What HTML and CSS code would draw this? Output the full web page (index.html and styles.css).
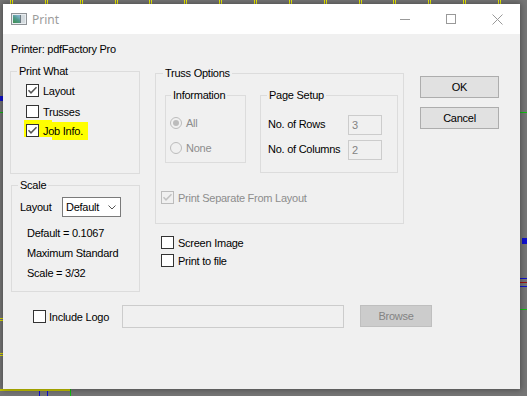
FILE: index.html
```html
<!DOCTYPE html>
<html>
<head>
<meta charset="utf-8">
<title>Print</title>
<link rel="stylesheet" href="styles.css">
</head>
<body>
<div class="window">
  <div class="titlebar">
    <svg class="app-icon" width="16" height="12" viewBox="0 0 16 12">
      <defs>
        <linearGradient id="pic" x1="0" y1="1" x2="0.6" y2="0">
          <stop offset="0" stop-color="#3f8f4f"/>
          <stop offset="0.6" stop-color="#4f9a8c"/>
          <stop offset="1" stop-color="#7fb0c8"/>
        </linearGradient>
      </defs>
      <rect x="0.5" y="0.5" width="15" height="11" fill="#e9edf0" stroke="#8e9296"/>
      <rect x="2" y="2" width="7" height="8" fill="url(#pic)"/>
      <rect x="9" y="2" width="1" height="8" fill="#6d7a82"/>
      <rect x="10" y="2" width="4" height="8" fill="#d3dade"/>
    </svg>
    <span class="title">Print</span>
    <div class="caption">
      <span class="cap"><svg width="10" height="10" viewBox="0 0 10 10"><path d="M0 5.5H10" stroke="#999" stroke-width="1"/></svg></span>
      <span class="cap"><svg width="10" height="10" viewBox="0 0 10 10"><rect x="0.5" y="0.5" width="9" height="9" fill="none" stroke="#999"/></svg></span>
      <span class="cap"><svg width="11" height="11" viewBox="0 0 11 11"><path d="M0.5 0.5L10.5 10.5M10.5 0.5L0.5 10.5" stroke="#999" stroke-width="1"/></svg></span>
    </div>
  </div>

  <div class="content">
    <div class="printer">Printer: pdfFactory Pro</div>

    <div class="main">
      <div class="col-left">
        <fieldset class="grp print-what">
          <legend class="lg-pw">Print What</legend>
          <div class="pw-list">
            <div class="chk r1"><span class="box"><svg class="tick" width="11" height="11" viewBox="0 0 11 11"><polyline points="1.5,5.2 4,7.8 9.5,2.2" fill="none" stroke="#555" stroke-width="1.5"/></svg></span><span>Layout</span></div>
            <div class="chk r2"><span class="box"></span><span>Trusses</span></div>
            <div class="chk r3 hl"><span class="box"><svg class="tick" width="11" height="11" viewBox="0 0 11 11"><polyline points="1.5,5.2 4,7.8 9.5,2.2" fill="none" stroke="#555" stroke-width="1.5"/></svg></span><span>Job Info.</span></div>
          </div>
        </fieldset>

        <fieldset class="grp scale">
          <legend class="lg-scale">Scale</legend>
          <div class="scale-row">
            <span class="lbl-layout">Layout</span>
            <div class="select"><span>Default</span><svg class="chev" width="8" height="5" viewBox="0 0 8 5"><polyline points="0.5,0.5 4,4 7.5,0.5" fill="none" stroke="#555" stroke-width="1"/></svg></div>
          </div>
          <div class="scale-info">
            <div>Default = 0.1067</div>
            <div>Maximum Standard</div>
            <div>Scale = 3/32</div>
          </div>
        </fieldset>
      </div>

      <div class="col-mid">
        <fieldset class="grp truss">
          <legend class="lg-truss">Truss Options</legend>
          <div class="truss-inner">
            <fieldset class="grp info">
              <legend class="lg-info">Information</legend>
              <div class="rad rr1"><span class="radio on"></span><span class="dis">All</span></div>
              <div class="rad rr2"><span class="radio"></span><span class="dis">None</span></div>
            </fieldset>
            <fieldset class="grp page">
              <legend class="lg-page">Page Setup</legend>
              <div class="ps-row p1"><span class="ps-lbl">No. of Rows</span><span class="num">3</span></div>
              <div class="ps-row p2"><span class="ps-lbl">No. of Columns</span><span class="num">2</span></div>
            </fieldset>
          </div>
          <div class="chk sep"><span class="box disabled"><svg class="tick" width="11" height="11" viewBox="0 0 11 11"><polyline points="1.5,5.2 4,7.8 9.5,2.2" fill="none" stroke="#c2c2c2" stroke-width="1.5"/></svg></span><span class="dis">Print Separate From Layout</span></div>
        </fieldset>
        <div class="chk screen"><span class="box"></span><span>Screen Image</span></div>
        <div class="chk tofile"><span class="box"></span><span>Print to file</span></div>
      </div>

      <div class="col-right">
        <div class="btn">OK</div>
        <div class="btn cancel">Cancel</div>
      </div>
    </div>

    <div class="bottom">
      <div class="chk logo"><span class="box"></span><span>Include Logo</span></div>
      <div class="path-field"></div>
      <div class="browse">Browse</div>
    </div>
  </div>
</div>
</body>
</html>
```

FILE: styles.css
```css
* { box-sizing: border-box; }

html, body {
  margin: 0;
  padding: 0;
}

body {
  width: 527px;
  height: 396px;
  overflow: hidden;
  font-family: "Liberation Sans", Arial, sans-serif;
  font-size: 11px;
  letter-spacing: -0.25px;
  color: #000;
  background:
    repeating-linear-gradient(90deg, transparent 0 10px, #f2f200 10px 11px, transparent 11px 12px, #f2f200 12px 13px, transparent 13px 34.86px) 0 0 / 100% 4px no-repeat,
    linear-gradient(#c8c800, #c8c800) 0 389px / 70px 2px no-repeat,
    linear-gradient(#1010d0, #1010d0) 39px 391px / 1px 5px no-repeat,
    linear-gradient(#1010d0, #1010d0) 47px 391px / 1px 5px no-repeat,
    linear-gradient(#10c010, #10c010) 70px 389px / 1px 7px no-repeat,
    linear-gradient(#e0e000, #e0e000) 0 318px / 3px 1px no-repeat,
    linear-gradient(#e0e000, #e0e000) 0 320px / 3px 1px no-repeat,
    linear-gradient(#e0e000, #e0e000) 0 353px / 3px 1px no-repeat,
    linear-gradient(#e0e000, #e0e000) 0 355px / 3px 1px no-repeat,
    linear-gradient(#10c010, #10c010) 0 112px / 3px 1px no-repeat,
    linear-gradient(#1010d0, #1010d0) 0 96px / 3px 5px no-repeat,
    linear-gradient(#10c010, #10c010) 520px 112px / 7px 1px no-repeat,
    linear-gradient(#1010d0, #1010d0) 522px 238px / 5px 6px no-repeat,
    linear-gradient(#1010d0, #1010d0) 520px 278px / 7px 1px no-repeat,
    linear-gradient(#a01010, #a01010) 520px 282px / 7px 1px no-repeat,
    linear-gradient(#1010d0, #1010d0) 520px 286px / 7px 1px no-repeat,
    linear-gradient(#10c010, #10c010) 520px 309px / 7px 1px no-repeat,
    #767676;
}

.window {
  margin: 4px 0 0 3px;
  width: 517px;
  height: 385px;
  background: #f0f0f0;
  box-shadow: 0 0 6px 1px rgba(0, 0, 0, 0.35);
  display: flex;
  flex-direction: column;
}

/* title bar */
.titlebar {
  height: 30px;
  background: #fff;
  display: flex;
  align-items: center;
  flex-shrink: 0;
}

.app-icon {
  margin-left: 8px;
  display: block;
}

.title {
  margin-left: 5px;
  font-family: "Noto Sans", "Open Sans", sans-serif;
  font-size: 12px;
  letter-spacing: 0;
  color: #9c9c9c;
}

.caption {
  margin-left: auto;
  display: flex;
}

.cap {
  width: 46px;
  height: 30px;
  display: flex;
  align-items: center;
  justify-content: center;
}

.cap svg { display: block; }

/* content */
.content {
  padding: 9px 0 0 7px;
}

.printer {
  line-height: 13px;
  margin-left: 1px;
}

.main {
  display: flex;
  align-items: flex-start;
  margin-top: 9px;
}

.grp {
  margin: 0;
  padding: 0;
  border: 1px solid #dcdcdc;
  min-width: 0;
}

legend {
  padding: 0 2px;
  line-height: 13px;
  font-size: 11px;
}

/* left column */
.print-what {
  width: 130px;
  height: 109px;
}

.lg-pw { margin-left: 6px; }

.pw-list {
  padding-left: 15px;
  display: flex;
  flex-direction: column;
  align-items: flex-start;
}

.chk {
  display: flex;
  align-items: center;
  height: 13px;
  gap: 4px;
  white-space: nowrap;
}

.box {
  width: 13px;
  height: 13px;
  border: 1px solid #333;
  background: #fff;
  flex-shrink: 0;
  display: flex;
  align-items: center;
  justify-content: center;
}

.box.disabled {
  border-color: #bcbcbc;
  background: #f0f0f0;
}

.tick { display: block; }

.r1 { margin-top: 6px; }
.r2 { margin-top: 8px; }

.hl {
  margin-top: 2px;
  margin-left: -2px;
  padding: 4px 0 3px 2px;
  height: 20px;
  width: 64px;
  background:
    linear-gradient(#ffff00, #ffff00) 0 0 / 28px 17px no-repeat,
    linear-gradient(#ffff00, #ffff00) 28px 2px / 36px 18px no-repeat;
}

.scale {
  margin: 5px 0 0 1px;
  width: 129px;
  height: 113px;
}

.lg-scale { margin-left: 6px; }

.scale-row {
  display: flex;
  align-items: center;
  margin-top: 5px;
  padding-left: 8px;
}

.lbl-layout { width: 42px; }

.select {
  width: 59px;
  height: 20px;
  border: 1px solid #7a7a7a;
  background: #fff;
  display: flex;
  align-items: center;
  padding-left: 3px;
}

.chev {
  display: block;
  margin-left: auto;
  margin-right: 4px;
}

.scale-info {
  padding-left: 15px;
  margin-top: 6px;
  line-height: 20px;
}

/* middle column */
.col-mid {
  margin-left: 15px;
  width: 249px;
}

.truss {
  margin-top: 2px;
  width: 249px;
  height: 157px;
}

.lg-truss { margin-left: 7px; }

.truss-inner {
  display: flex;
  align-items: flex-start;
  margin-top: 9px;
  padding-left: 9px;
}

.info {
  width: 81px;
  height: 74px;
}

.lg-info { margin-left: 5px; }

.page {
  margin-left: 14px;
  width: 138px;
  height: 84px;
}

.lg-page { margin-left: 6px; }

.rad {
  display: flex;
  align-items: center;
  gap: 4px;
  height: 12px;
  padding-left: 4px;
}

.rr1 { margin-top: 15px; }
.rr2 { margin-top: 13px; }

.radio {
  width: 12px;
  height: 12px;
  border-radius: 50%;
  border: 1px solid #bcbcbc;
  background: #f0f0f0;
  display: flex;
  align-items: center;
  justify-content: center;
}

.radio.on::after {
  content: "";
  width: 6px;
  height: 6px;
  border-radius: 50%;
  background: #bcbcbc;
}

.dis { color: #8d8d8d; }

.ps-row {
  display: flex;
  align-items: center;
  padding-left: 7px;
}

.p1 { margin-top: 13px; }
.p2 { margin-top: 5px; }

.ps-lbl {
  width: 80px;
  padding-bottom: 2px;
}

.num {
  width: 34px;
  height: 20px;
  border: 1px solid #cccccc;
  background: #f0f0f0;
  color: #838383;
  padding-left: 3px;
  display: flex;
  align-items: center;
}

.sep {
  margin-top: 18px;
  margin-left: 5px;
}

.screen {
  margin-top: 12px;
  margin-left: 6px;
}

.tofile {
  margin-top: 5px;
  margin-left: 6px;
}

/* right column */
.col-right {
  margin-left: 16px;
  margin-top: 11px;
  width: 79px;
}

.btn {
  width: 79px;
  height: 22px;
  border: 1px solid #adadad;
  background: #e1e1e1;
  display: flex;
  align-items: center;
  justify-content: center;
}

.btn.cancel { margin-top: 9px; }

/* bottom row */
.bottom {
  display: flex;
  align-items: flex-start;
  margin-top: 13px;
  padding-left: 23px;
}

.logo {
  margin-top: 5px;
  width: 89px;
  gap: 3px;
}

.path-field {
  width: 222px;
  height: 23px;
  border: 1px solid #cccccc;
  background: #f0f0f0;
}

.browse {
  margin-left: 16px;
  width: 72px;
  height: 22px;
  border: 1px solid #bfbfbf;
  background: #cccccc;
  color: #838383;
  display: flex;
  align-items: center;
  justify-content: center;
}
```
